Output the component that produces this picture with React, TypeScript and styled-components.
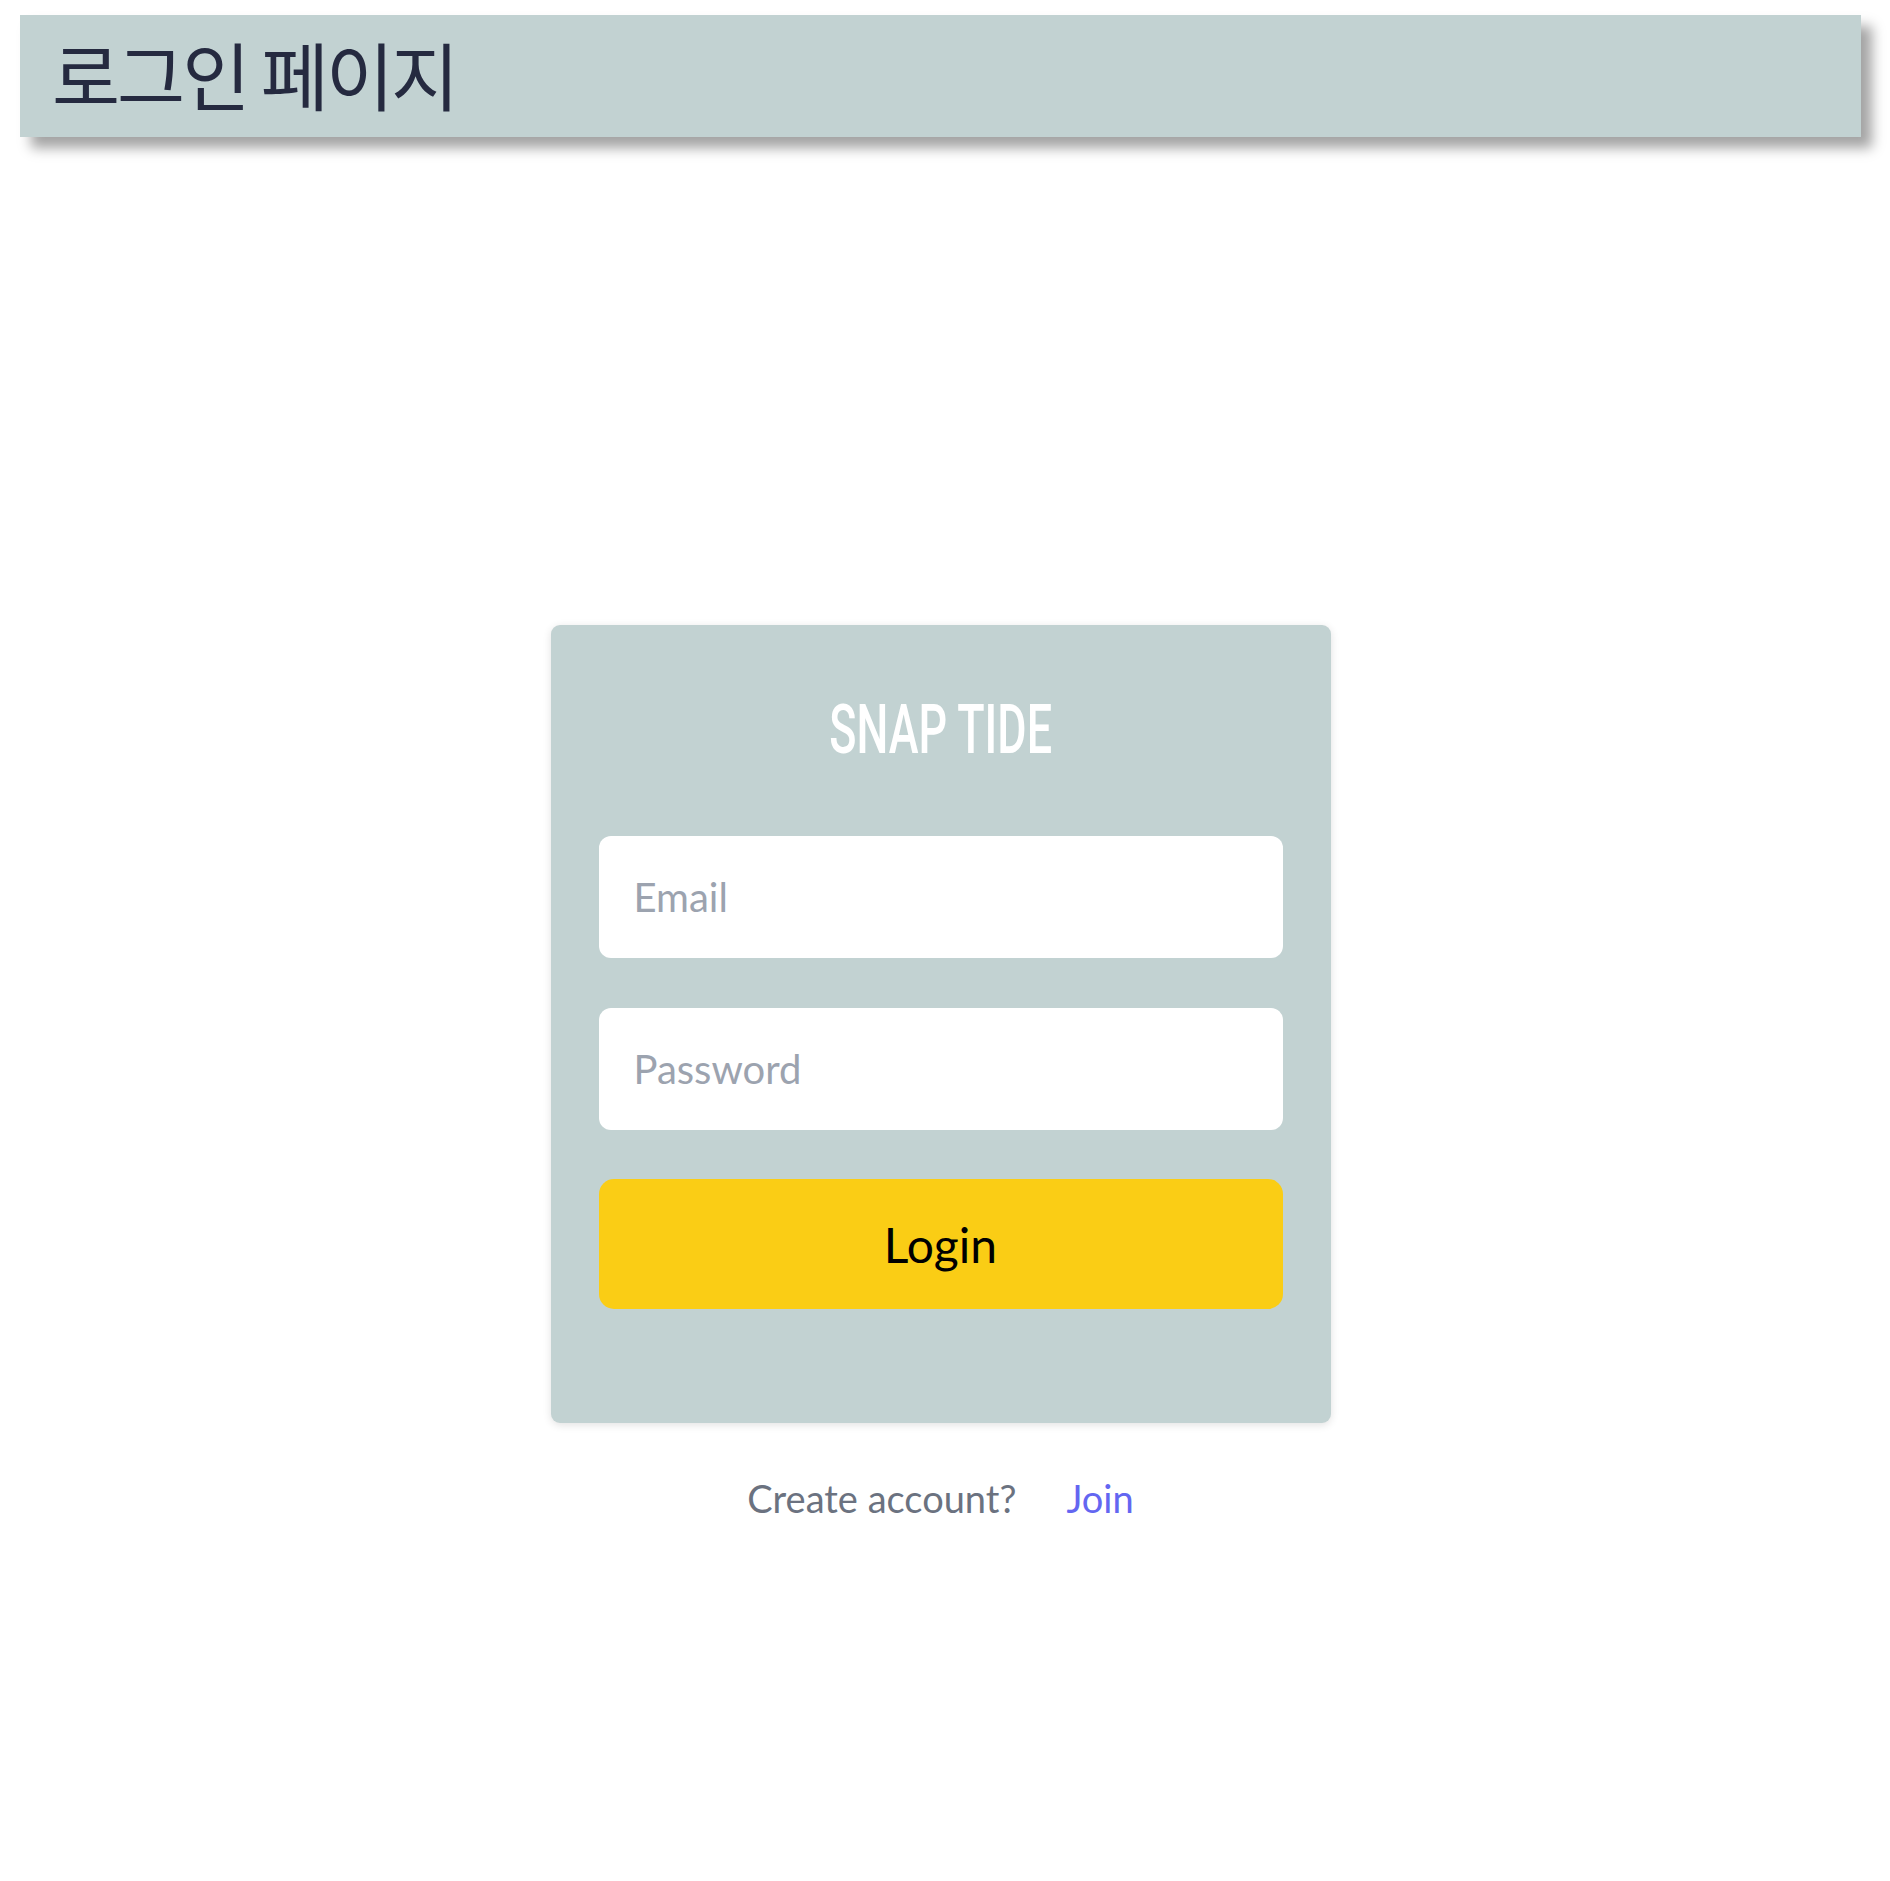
import React, { useState } from 'react';
import styled, { createGlobalStyle } from 'styled-components';

const GlobalStyle = createGlobalStyle`
  html, body {
    margin: 0;
    padding: 0;
    background: #ffffff;
  }
  * {
    box-sizing: border-box;
  }
`;

const Page = styled.div`
  min-height: 1881px;
  padding: 15px 29px 0 20px;
  font-family: Lato, 'Noto Sans', sans-serif;
`;

const Header = styled.header`
  height: 122px;
  display: flex;
  align-items: center;
  padding: 0 32px 7px;
  background: #c2d2d2;
  box-shadow: 11px 11px 12px rgba(0, 0, 0, 0.36);
`;

const HeaderTitle = styled.h1`
  margin: 0;
  font-family: 'Noto Sans CJK KR', 'Noto Sans', sans-serif;
  font-size: 74px;
  font-weight: 400;
  letter-spacing: -3px;
  line-height: 1;
  color: #252a40;
`;

const Main = styled.main`
  display: flex;
  flex-direction: column;
  align-items: center;
  padding-top: 488px;
`;

const Card = styled.form`
  width: 780px;
  padding: 71px 48px 114px;
  background: #c2d2d2;
  border-radius: 9px;
  box-shadow: 0 2px 8px rgba(0, 0, 0, 0.12);
  display: flex;
  flex-direction: column;
`;

const Brand = styled.div`
  display: flex;
  justify-content: center;
  height: 68px;
  margin-bottom: 72px;
`;

const BrandText = styled.span`
  display: inline-block;
  font-family: Roboto, 'DejaVu Sans', sans-serif;
  font-size: 68px;
  font-weight: 500;
  line-height: 1;
  color: #ffffff;
  transform: scaleX(0.66);
`;

const Field = styled.input`
  height: 122px;
  width: 100%;
  padding: 0 35px;
  border: none;
  border-radius: 12px;
  background: #ffffff;
  font-family: Lato, sans-serif;
  font-size: 40px;
  color: #1f2937;
  outline: none;
  margin-bottom: ${props => props.type === 'password' ? '49px' : '50px'};

  &::placeholder {
    color: #9ca3af;
  }
`;

const SubmitButton = styled.button`
  height: 130px;
  width: 100%;
  border: none;
  border-radius: 15px;
  background: #facd15;
  font-family: Lato, sans-serif;
  font-size: 48px;
  font-weight: 400;
  color: #000000;
  cursor: pointer;
`;

const Footer = styled.div`
  margin-top: 53px;
  display: flex;
  gap: 50px;
  font-size: 38px;
  line-height: 1.2;
`;

const FooterText = styled.span`
  color: #6b7280;
`;

const JoinLink = styled.a`
  color: #6366f1;
  text-decoration: none;
`;

export default function App() {
  const [email, setEmail] = useState('');
  const [password, setPassword] = useState('');

  return (
    <Page>
      <GlobalStyle />
      <Header>
        <HeaderTitle>로그인 페이지</HeaderTitle>
      </Header>
      <Main>
        <Card onSubmit={e => e.preventDefault()}>
          <Brand>
            <BrandText>SNAP TIDE</BrandText>
          </Brand>
          <Field
            type="email"
            placeholder="Email"
            value={email}
            onChange={e => setEmail(e.target.value)}
          />
          <Field
            type="password"
            placeholder="Password"
            value={password}
            onChange={e => setPassword(e.target.value)}
          />
          <SubmitButton type="submit">Login</SubmitButton>
        </Card>
        <Footer>
          <FooterText>Create account?</FooterText>
          <JoinLink href="#">Join</JoinLink>
        </Footer>
      </Main>
    </Page>
  );
}
